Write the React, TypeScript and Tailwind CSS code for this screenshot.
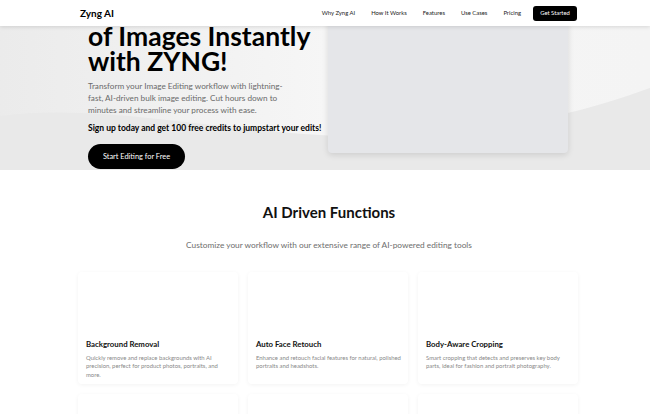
const NAV_LINKS = ['Why Zyng AI', 'How It Works', 'Features', 'Use Cases', 'Pricing'];

const FEATURES = [
  {
    title: 'Background Removal',
    text: 'Quickly remove and replace backgrounds with AI precision, perfect for product photos, portraits, and more.',
  },
  {
    title: 'Auto Face Retouch',
    text: 'Enhance and retouch facial features for natural, polished portraits and headshots.',
  },
  {
    title: 'Body-Aware Cropping',
    text: 'Smart cropping that detects and preserves key body parts, ideal for fashion and portrait photography.',
  },
];

function Nav() {
  return (
    <header className="relative z-10 h-[26px] bg-white shadow-[0_1px_4px_rgba(0,0,0,0.12)]">
      <div className="ml-[80px] flex h-full w-[497px] items-center justify-between">
        <span className="text-[10px] font-bold text-black">Zyng AI</span>
        <nav className="flex items-center gap-[16px]">
          {NAV_LINKS.map((l) => (
            <a key={l} className="text-[5.9px] text-[#222]">
              {l}
            </a>
          ))}
          <button className="ml-[-4px] h-[15px] w-[44px] rounded-[3px] bg-black text-[5.9px] text-white">
            Get Started
          </button>
        </nav>
      </div>
    </header>
  );
}

function Hero() {
  return (
    <section className="relative h-[144px] overflow-hidden bg-gradient-to-r from-[#ebebeb] via-[#f6f6f6] to-[#f4f4f4]">
      <svg className="absolute inset-0 h-full w-full" viewBox="0 0 650 144" preserveAspectRatio="none">
        <path d="M0 90 C120 74 260 118 420 110 C520 104 600 80 650 62 L650 144 L0 144 Z" fill="#e9e9e9" />
      </svg>
      <div className="relative ml-[80px] flex w-[498px] justify-between">
        <div className="ml-[8px] flex w-[240px] flex-col">
          <h1 className="mt-[-2px] whitespace-nowrap text-[26.5px] font-bold leading-[25px] text-black">
            of Images Instantly
            <br />
            with ZYNG!
          </h1>
          <p className="mt-[6px] w-[206px] text-[8.2px] leading-[12px] text-[#6a6a6a]">
            Transform your Image Editing workflow with lightning-fast, AI-driven bulk image editing. Cut hours down to
            minutes and streamline your process with ease.
          </p>
          <p className="mt-[6px] whitespace-nowrap text-[8.5px] font-bold text-black">
            Sign up today and get 100 free credits to jumpstart your edits!
          </p>
          <button className="mt-[9px] h-[25px] w-[97px] rounded-full bg-black text-[7.4px] text-white">
            Start Editing for Free
          </button>
        </div>
        <div className="mr-[10px] mt-[-26px] h-[153px] w-[240px] rounded-b-[4px] bg-[#e5e6e9] shadow-[0_2px_6px_rgba(0,0,0,0.12)]" />
      </div>
    </section>
  );
}

function Functions() {
  return (
    <section className="bg-white pt-[31px]">
      <h2 className="ml-[80px] w-[498px] text-center text-[15px] font-bold text-[#111]">AI Driven Functions</h2>
      <p className="ml-[80px] mt-[15px] w-[498px] text-center text-[8.3px] text-[#6e6e6e]">
        Customize your workflow with our extensive range of AI-powered editing tools
      </p>
      <div className="ml-[78px] mt-[21px] grid w-[500px] grid-cols-3 gap-[10px]">
        {FEATURES.map((f) => (
          <div
            key={f.title}
            className="flex h-[112px] flex-col rounded-[4px] bg-white pl-[8px] pr-[5px] pt-[67px] shadow-[0_1px_4px_rgba(0,0,0,0.05)]"
          >
            <h3 className="text-[7.8px] font-bold leading-[10px] text-[#111]">{f.title}</h3>
            <p className="mt-[5px] text-[5.9px] leading-[8.5px] text-[#888]">{f.text}</p>
          </div>
        ))}
        {FEATURES.map((f) => (
          <div key={f.title + '2'} className="h-[112px] rounded-[4px] bg-white shadow-[0_1px_4px_rgba(0,0,0,0.05)]" />
        ))}
      </div>
    </section>
  );
}

export default function App() {
  return (
    <div className="h-[414px] overflow-hidden bg-white font-['Lato',sans-serif]">
      <Nav />
      <Hero />
      <Functions />
    </div>
  );
}
